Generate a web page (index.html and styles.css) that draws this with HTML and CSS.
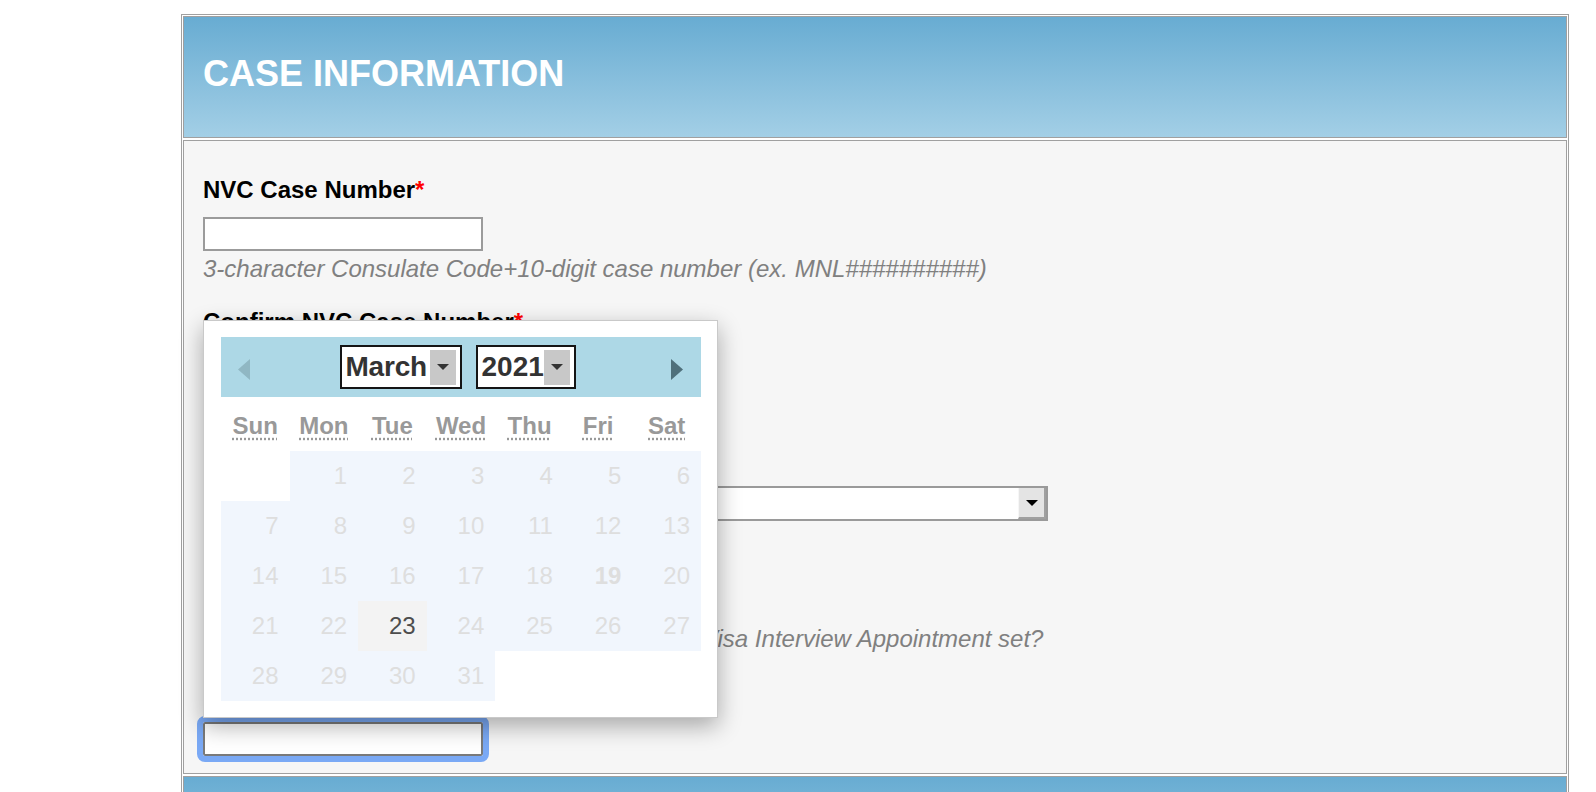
FILE: index.html
```html
<!DOCTYPE html>
<html lang="en">
<head>
    <meta charset="UTF-8">
    <meta name="viewport" content="width=device-width, initial-scale=1.0">
    <title>Case Information</title>
    <link rel="stylesheet" href="styles.css">
</head>
<body>
    <div class="case-table">
        <div class="section-head">
            <h2>CASE INFORMATION</h2>
        </div>
        <div class="section-body">
            <form id="caseForm">
                <div class="field">
                    <label for="caseNumber">NVC Case Number<span class="req">*</span></label>
                    <input type="text" id="caseNumber" name="caseNumber" class="text-input">
                    <div class="hint">3-character Consulate Code+10-digit case number (ex. MNL##########)</div>
                </div>
                <div class="field">
                    <label for="caseNumber2">Confirm NVC Case Number<span class="req">*</span></label>
                    <input type="text" id="caseNumber2" name="caseNumber2" class="text-input">
                    <div class="hint">Type the case number again</div>
                </div>
                <div class="field">
                    <label class="label-select">Consulate<span class="req">*</span></label>
                    <div class="select-box">
                        <span class="select-btn"><span class="select-caret"></span></span>
                    </div>
                </div>
                <div class="field">
                    <label>Interview Scheduled?<span class="req">*</span></label>
                    <div class="radio-row">
                        <label class="radio"><input type="radio" name="scheduled"> Yes</label>
                        <label class="radio"><input type="radio" name="scheduled"> No</label>
                    </div>
                    <div class="hint">When did you get the email notification of your Visa Interview Appointment set?</div>
                </div>
                <div class="field field-last">
                    <label for="interviewDate" class="label-date">Interview Date<span class="req">*</span></label>
                    <input type="text" id="interviewDate" name="interviewDate" class="text-input is-focused">
                </div>
            </form>

            <!-- datepicker popup, opened above the date field -->
            <div class="datepicker">
                <div class="dp-head">
                    <svg class="dp-prev" width="12" height="21" viewBox="0 0 12 21"><polygon points="12,0 0,10.5 12,21"/></svg>
                    <div class="dp-selects">
                        <div class="dp-select dp-month">March<span class="dp-caret"></span></div>
                        <div class="dp-select dp-year">2021<span class="dp-caret"></span></div>
                    </div>
                    <svg class="dp-next" width="12" height="21" viewBox="0 0 12 21"><polygon points="0,0 12,10.5 0,21"/></svg>
                </div>
                <div class="dp-dow">
                    <abbr title="Sunday">Sun</abbr>
                    <abbr title="Monday">Mon</abbr>
                    <abbr title="Tuesday">Tue</abbr>
                    <abbr title="Wednesday">Wed</abbr>
                    <abbr title="Thursday">Thu</abbr>
                    <abbr title="Friday">Fri</abbr>
                    <abbr title="Saturday">Sat</abbr>
                </div>
                <div class="dp-days">
                    <span class="day-empty"></span>
                    <span class="day">1</span><span class="day">2</span><span class="day">3</span><span class="day">4</span><span class="day">5</span><span class="day">6</span>
                    <span class="day">7</span><span class="day">8</span><span class="day">9</span><span class="day">10</span><span class="day">11</span><span class="day">12</span><span class="day">13</span>
                    <span class="day">14</span><span class="day">15</span><span class="day">16</span><span class="day">17</span><span class="day">18</span><span class="day day-bold">19</span><span class="day">20</span>
                    <span class="day">21</span><span class="day">22</span><span class="day day-today">23</span><span class="day">24</span><span class="day">25</span><span class="day">26</span><span class="day">27</span>
                    <span class="day">28</span><span class="day">29</span><span class="day">30</span><span class="day">31</span>
                    <span class="day-empty"></span><span class="day-empty"></span><span class="day-empty"></span>
                </div>
            </div>
        </div>
        <div class="section-head">
            <h2>APPLICANT INFORMATION</h2>
        </div>
    </div>
</body>
</html>
```

FILE: styles.css
```css
body {
    margin: 0;
    font-family: "Liberation Sans", Arial, Helvetica, sans-serif;
    background-color: #fff;
}
.case-table {
    width: 1388px;
    margin: 14px 0 0 181px;
    box-sizing: border-box;
    border: 1px solid #a0a0a0;
    padding: 1px;
    display: flex;
    flex-direction: column;
    gap: 2px;
}
.section-head {
    height: 122px;
    box-sizing: border-box;
    border: 1px solid #a0a0a0;
    padding: 36px 19px 0;
    background: linear-gradient(#68acd2, #a3cfe6);
}
.section-head h2 {
    margin: 0;
    color: #fff;
    font-size: 36px;
    line-height: 41px;
    font-weight: bold;
}
.section-body {
    position: relative;
    border: 1px solid #a0a0a0;
    background-color: #f6f6f6;
    padding: 35px 19px 17px;
}
.field {
    margin-bottom: 26px;
}
.field-last {
    margin-bottom: 0;
}
.field > label {
    display: block;
    font-size: 24px;
    line-height: 27px;
    font-weight: bold;
    color: #000;
    margin-bottom: 14px;
}
.field > .label-select {
    margin-bottom: 19px;
}
.field > .label-date {
    margin-bottom: 17px;
}
.req {
    color: #f00;
}
.text-input {
    display: block;
    width: 280px;
    height: 34px;
    box-sizing: border-box;
    margin: 0;
    border: 2px solid #9b9b9b;
    background-color: #fff;
}
.text-input.is-focused {
    border-color: #7a7a7a;
    border-radius: 2px;
    outline: 6px solid #7aa9f5;
}
.hint {
    margin-top: 4px;
    font-size: 24px;
    line-height: 27px;
    font-style: italic;
    color: #808080;
}
.select-box {
    width: 845px;
    height: 35px;
    box-sizing: border-box;
    border: 2px solid #9a9a9a;
    background-color: #fff;
    display: flex;
    justify-content: flex-end;
}
.select-btn {
    width: 28px;
    box-sizing: border-box;
    background-color: #e4e4e4;
    border-left: 1px solid #f6f6f6;
    border-right: 2px solid #a0a0a0;
    border-bottom: 2px solid #a0a0a0;
    display: flex;
    align-items: center;
    justify-content: center;
}
.select-caret {
    width: 0;
    height: 0;
    border-left: 6px solid transparent;
    border-right: 6px solid transparent;
    border-top: 6px solid #000;
}
.radio-row {
    height: 33px;
    display: flex;
    align-items: center;
    gap: 20px;
    font-size: 24px;
}

/* datepicker */
.datepicker {
    position: absolute;
    left: 19px;
    top: 179px;
    z-index: 2;
    width: 515px;
    box-sizing: border-box;
    border: 1px solid #c9c9c9;
    padding: 16px 16px 16px 17px;
    background-color: #fff;
    box-shadow: 0 8px 22px rgba(0, 0, 0, 0.32);
}
.dp-head {
    height: 60px;
    background-color: #add8e6;
    display: flex;
    align-items: center;
    justify-content: space-between;
    padding: 4px 18px 0 17px;
    box-sizing: border-box;
}
.dp-prev {
    fill: #90b7c3;
}
.dp-next {
    fill: #4f707b;
}
.dp-selects {
    display: flex;
    gap: 14px;
    margin-top: -4px;
    margin-left: -6px;
}
.dp-select {
    height: 44px;
    box-sizing: border-box;
    border: 2px solid #151515;
    background-color: #fff;
    padding: 0 4px;
    display: flex;
    align-items: center;
    font-size: 28px;
    font-weight: bold;
    color: #333;
}
.dp-month {
    width: 122px;
    letter-spacing: -0.2px;
}
.dp-year {
    width: 100px;
}
.dp-caret {
    width: 26px;
    height: 35px;
    margin-left: auto;
    background-color: #c8c8c8;
    display: flex;
    align-items: center;
    justify-content: center;
}
.dp-caret::after {
    content: "";
    border-left: 6px solid transparent;
    border-right: 6px solid transparent;
    border-top: 6px solid #333;
}
.dp-dow {
    height: 54px;
    box-sizing: border-box;
    padding-top: 15px;
    display: grid;
    grid-template-columns: repeat(7, 1fr);
    text-align: center;
    font-size: 24px;
    line-height: 27px;
    font-weight: bold;
    color: #999;
}
.dp-dow abbr {
    text-decoration: underline dotted #999;
    text-underline-offset: 4px;
}
.dp-days {
    display: grid;
    grid-template-columns: repeat(7, 1fr);
    grid-auto-rows: 50px;
}
.day {
    background-color: #f1f6fd;
    color: #dedede;
    font-size: 24px;
    padding-right: 11px;
    display: flex;
    align-items: center;
    justify-content: flex-end;
}
.day-bold {
    font-weight: bold;
}
.day-today {
    background-color: #f3f3f3;
    color: #4d4d4d;
}
```
